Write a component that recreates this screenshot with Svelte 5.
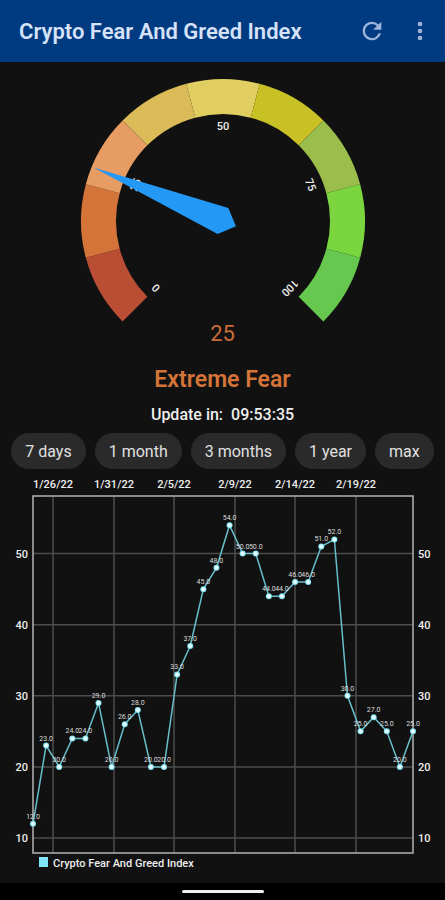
<script>
  const segments = ['#b94e35', '#d47439', '#e69c63', '#dabb57', '#e0cf60', '#c8c125', '#9bbd4b', '#7ad53f', '#66c84e'];
  const cx = 143;
  const cy = 159;

  function polar(radius, degrees) {
    const a = (degrees * Math.PI) / 180;
    return [cx + radius * Math.cos(a), cy + radius * Math.sin(a)];
  }

  function arc(index) {
    const from = 135 + index * 30;
    const to = from + 30;
    return `M${polar(142, from)} A142 142 0 0 1 ${polar(142, to)} L${polar(107, to)} A107 107 0 0 0 ${polar(107, from)}Z`;
  }

  const ticks = [0, 25, 50, 75, 100];
  const value = 25;
  const needleAngle = 135 + value * 2.7;

  const ranges = ['7 days', '1 month', '3 months', '1 year', 'max'];

  const data = [12, 23, 20, 24, 24, 29, 20, 26, 28, 20, 20, 33, 37, 45, 48, 54, 50, 50, 44, 44, 46, 46, 51, 52, 30, 25, 27, 25, 20, 25];
  const left = 33;
  const right = 413;
  const top = 27;
  const bottom = 384;
  const x = (i) => left + (i * (right - left)) / (data.length - 1);
  const y = (v) => 369 - (v - 10) * 7.11;
  const line = data.map((v, i) => `${x(i)},${y(v)}`).join(' ');
  const levels = [50, 40, 30, 20, 10];
  const dates = [
    { label: '1/26/22', at: 53 },
    { label: '1/31/22', at: 114 },
    { label: '2/5/22', at: 174 },
    { label: '2/9/22', at: 235 },
    { label: '2/14/22', at: 295 },
    { label: '2/19/22', at: 356 }
  ];
</script>

<div class="app">
  <header>
    <h1>Crypto Fear And Greed Index</h1>
    <button class="icon" aria-label="Refresh">
      <svg viewBox="0 0 24 24" width="28" height="28">
        <path d="M17.65 6.35A7.96 7.96 0 0 0 12 4a8 8 0 1 0 7.73 10h-2.08A6 6 0 1 1 12 6c1.66 0 3.14.69 4.22 1.78L13 11h7V4z" />
      </svg>
    </button>
    <button class="icon" aria-label="More options">
      <svg viewBox="0 0 24 24" width="28" height="28">
        <circle cx="12" cy="6" r="2" /><circle cx="12" cy="12" r="2" /><circle cx="12" cy="18" r="2" />
      </svg>
    </button>
  </header>

  <main>
    <svg class="gauge" viewBox="0 0 286 260" width="286" height="260" role="img" aria-label="Index gauge">
      {#each segments as color, i}
        <path d={arc(i)} fill={color} />
      {/each}
      {#each ticks as tick}
        <text transform={`rotate(${tick * 2.7 - 135} ${cx} ${cy})`} x={cx} y={cy - 91}>{tick}</text>
      {/each}
      <path class="needle" transform={`translate(${cx} ${cy}) rotate(${needleAngle})`} d="M140 0L0 14L-14 0L0 -14Z" />
    </svg>
    <div class="value">{value}</div>
    <h2>Extreme Fear</h2>
    <p class="update"><span>Update in:</span><span>09:53:35</span></p>

    <div class="ranges">
      {#each ranges as range}
        <button class="chip">{range}</button>
      {/each}
    </div>

    <svg class="chart" viewBox="0 0 445 414" role="img" aria-label="Index history">
      <g class="grid">
        {#each dates as d}
          <line x1={d.at} x2={d.at} y1={top} y2={bottom} />
        {/each}
        {#each levels as level}
          <line x1={left} x2={right} y1={y(level)} y2={y(level)} />
        {/each}
      </g>
      <rect class="frame" x={left} y={top} width={right - left} height={bottom - top} />
      <polyline points={line} />
      {#each data as v, i}
        <circle class="dot" cx={x(i)} cy={y(v)} r="3" />
        <circle class="core" cx={x(i)} cy={y(v)} r="2" />
      {/each}
      <g class="labels">
        {#each data as v, i}
          <text x={x(i)} y={y(v) - 5}>{v.toFixed(1)}</text>
        {/each}
      </g>
      <g class="axis">
        {#each dates as d}
          <text class="date" x={d.at} y="19">{d.label}</text>
        {/each}
        {#each levels as level}
          <text class="end" x="28" y={y(level) + 4}>{level}</text>
          <text x="418" y={y(level) + 4}>{level}</text>
        {/each}
        <rect class="key" x="39" y="388" width="9" height="10" />
        <text x="53" y="398">Crypto Fear And Greed Index</text>
      </g>
    </svg>
  </main>

  <footer><span class="handle"></span></footer>
</div>

<style>
  :global(body) {
    margin: 0;
    background: #111;
  }
  .app {
    min-height: 100vh;
    display: flex;
    flex-direction: column;
    background: #111;
    color: #eee;
    font-family: Roboto, 'Liberation Sans', sans-serif;
  }
  header {
    display: flex;
    align-items: center;
    height: 62px;
    padding: 0 1px 0 19px;
    background: #003a81;
  }
  h1 {
    flex: 1;
    margin: 0;
    padding-top: 2px;
    font-size: 22px;
    font-weight: 600;
    line-height: 28px;
    color: #d6e2f8;
    white-space: nowrap;
  }
  button {
    border: 0;
    font-family: inherit;
    cursor: pointer;
  }
  .icon {
    display: flex;
    align-items: center;
    justify-content: center;
    width: 48px;
    height: 48px;
    padding: 0;
    background: none;
    fill: #9db4db;
  }
  main {
    flex: 1;
    display: flex;
    flex-direction: column;
    align-items: center;
  }
  .gauge {
    display: block;
  }
  .gauge text {
    fill: #eee;
    font-size: 11px;
    font-weight: 500;
    text-anchor: middle;
  }
  .needle {
    fill: #2498f5;
  }
  .value {
    font-size: 22px;
    line-height: 24px;
    color: #c96d38;
  }
  h2 {
    margin: 19px 0 0;
    font-size: 23px;
    font-weight: 600;
    line-height: 30px;
    color: #d47439;
  }
  .update {
    display: flex;
    gap: 8px;
    margin: 10px 0 9px;
    font-size: 16px;
    font-weight: 500;
    line-height: 19px;
  }
  .ranges {
    display: flex;
    justify-content: center;
    gap: 9px;
  }
  .chip {
    height: 36px;
    padding: 0 14px;
    border-radius: 18px;
    background: #2a2a2a;
    color: #e0e0e0;
    font-size: 16px;
    white-space: nowrap;
  }
  .chart {
    display: block;
    width: 100%;
  }
  .grid line {
    stroke: #4c4c4c;
    stroke-width: 1.5;
  }
  .frame {
    fill: none;
    stroke: #b4b4b4;
    stroke-width: 1.5;
  }
  polyline {
    fill: none;
    stroke: #68bfcc;
    stroke-width: 1.5;
  }
  .dot {
    fill: #7fe3f3;
  }
  .core {
    fill: #e6fcff;
  }
  .labels text {
    fill: #ddd;
    font-size: 7px;
    text-anchor: middle;
  }
  .axis text {
    fill: #eee;
    font-size: 11px;
    font-weight: 500;
  }
  .axis .date {
    text-anchor: middle;
  }
  .axis .end {
    text-anchor: end;
  }
  .key {
    fill: #80e5f7;
  }
  footer {
    display: flex;
    align-items: center;
    justify-content: center;
    height: 17px;
    background: #000;
  }
  .handle {
    width: 82px;
    height: 3px;
    border-radius: 2px;
    background: #eee;
  }
</style>
